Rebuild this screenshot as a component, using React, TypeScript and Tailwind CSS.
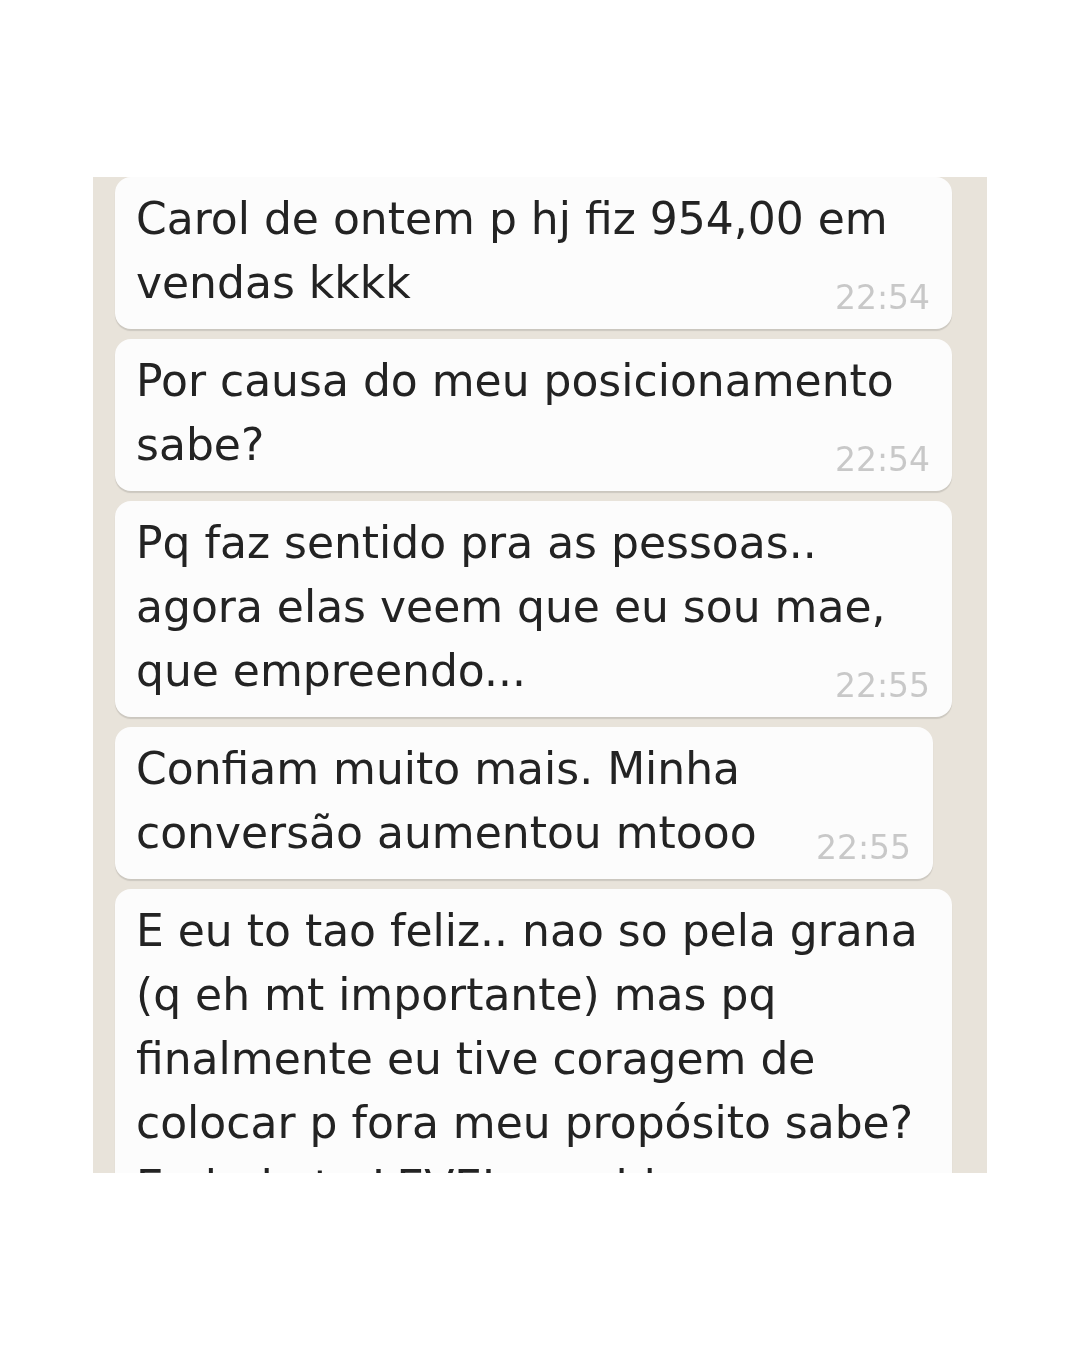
import clsx from "clsx"

type Message = {
  lines: string[]
  time?: string
  narrow?: boolean
}

const messages: Message[] = [
  { lines: ["Carol de ontem p hj fiz 954,00 em", "vendas kkkk"], time: "22:54" },
  { lines: ["Por causa do meu posicionamento", "sabe?"], time: "22:54" },
  {
    lines: [
      "Pq faz sentido pra as pessoas..",
      "agora elas veem que eu sou mae,",
      "que empreendo...",
    ],
    time: "22:55",
  },
  {
    lines: ["Confiam muito mais. Minha", "conversão aumentou mtooo"],
    time: "22:55",
    narrow: true,
  },
  {
    // the last line is cut off by the bottom of the screenshot
    lines: [
      "E eu to tao feliz.. nao so pela grana",
      "(q eh mt importante) mas pq",
      "finalmente eu tive coragem de",
      "colocar p fora meu propósito sabe?",
      "E ainda to LEVEL na vida",
    ],
  },
]

const Bubble = ({ lines, time, narrow }: Message) => (
  <div
    className={clsx(
      "relative shrink-0 rounded-[16px] bg-[#fcfcfc] pt-[10px] pb-[14px] pl-[21px] shadow-[0_2px_1px_rgba(0,0,0,0.12)]",
      narrow ? "w-[818px]" : "w-[837px]",
    )}
  >
    {lines.map((line) => (
      <p key={line} className="h-[64px] text-[44px] leading-[64px] whitespace-nowrap text-[#232323]">
        {line}
      </p>
    ))}
    {time && (
      <span className="absolute right-[22px] bottom-[15px] text-[33px] leading-none text-[#c8c8c8]">
        {time}
      </span>
    )}
  </div>
)

export default function App() {
  return (
    <div className="min-h-[1350px] w-[1080px] bg-white pt-[177px] font-['DejaVu_Sans',sans-serif]">
      <div className="ml-[93px] h-[996px] w-[894px] overflow-hidden bg-[#e8e3da] blur-[0.4px]">
        <div className="flex flex-col gap-[10px] pl-[22px]">
          {messages.map((m, i) => (
            <Bubble key={i} {...m} />
          ))}
        </div>
      </div>
    </div>
  )
}
